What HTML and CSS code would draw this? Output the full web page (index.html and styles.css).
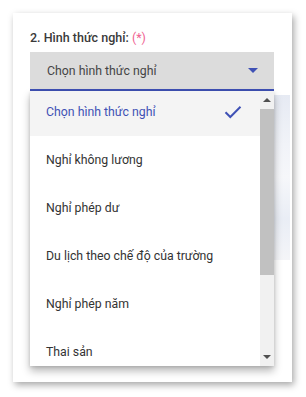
FILE: index.html
```html
<!DOCTYPE html>
<html lang="vi">
<head>
  <meta charset="UTF-8" />
  <title>Hình thức nghỉ</title>
  <link rel="stylesheet" href="styles.css">
</head>
<body>

  <!-- Form card -->
  <div class="card">
    <div class="field-label">2. Hình thức nghỉ: <span class="required">(*)</span></div>

    <div class="select">
      <span class="select-value">Chọn hình thức nghỉ</span>
      <span class="select-arrow"></span>
    </div>

    <!-- content behind the open menu -->
    <div class="behind"></div>

    <!-- open menu -->
    <div class="dropdown">
      <div class="options">
        <div class="options-inner">
          <div class="option selected">
            <span>Chọn hình thức nghỉ</span>
            <svg class="check" width="18" height="14" viewBox="0 0 18 14">
              <path d="M1.5 7.2 L6.3 12 L16.5 1.8" fill="none" stroke="#3f51b5" stroke-width="2"/>
            </svg>
          </div>
          <div class="option">Nghỉ không lương</div>
          <div class="option">Nghỉ phép dư</div>
          <div class="option">Du lịch theo chế độ của trường</div>
          <div class="option">Nghỉ phép năm</div>
          <div class="option">Thai sản</div>
        </div>
      </div>
      <div class="scrollbar">
        <span class="arrow-up"></span>
        <div class="thumb"></div>
        <span class="arrow-down"></span>
      </div>
    </div>
  </div>

</body>
</html>
```

FILE: styles.css
```css
body {
  margin: 0;
  background: #fff;
  font-family: Roboto, "Noto Sans", Arial, sans-serif;
}

.card {
  position: relative;
  margin: 13px;
  width: 279px;
  height: 369px;
  box-sizing: border-box;
  padding: 17px 18px 0 17px;
  background: #fff;
  box-shadow: 2px 3px 7px rgba(0, 0, 0, 0.35);
}

.field-label {
  font-size: 12.5px;
  line-height: 16px;
  font-weight: 500;
  color: #3a3a3a;
  margin-bottom: 6px;
}

.required {
  color: #f06292;
  font-weight: 400;
}

.select {
  height: 37px;
  display: flex;
  align-items: center;
  justify-content: space-between;
  padding: 0 16px 0 17px;
  background: #dcdcdc;
  border-bottom: 2px solid #3f51b5;
}

.select-value {
  font-size: 12.3px;
  color: #444;
}

.select-arrow {
  width: 0;
  height: 0;
  border-left: 5px solid transparent;
  border-right: 5px solid transparent;
  border-top: 5px solid #3f51b5;
}

.behind {
  margin: 4px -16px 0 0;
  height: 165px;
  background: linear-gradient(180deg, #e6eaf3 0%, #f1f3f8 30%, #f6f7fa 50%, #e9edf5 75%, #f4f5f8 100%);
}

.dropdown {
  position: absolute;
  left: 17px;
  top: 78px;
  width: 244px;
  height: 275px;
  display: flex;
  background: #fff;
  box-shadow: 0 5px 8px rgba(0, 0, 0, 0.28), 0 1px 3px rgba(0, 0, 0, 0.12);
}

.options {
  flex: 1;
  overflow: hidden;
}

.options-inner {
  margin-top: -3px;
}

.option {
  height: 48px;
  display: flex;
  align-items: center;
  justify-content: space-between;
  padding: 0 18px 0 16px;
  font-size: 12.3px;
  color: #333;
}

.option.selected {
  background: #f4f4f4;
  color: #3f51b5;
}

.check {
  display: block;
}

.scrollbar {
  width: 14px;
  background: #f1f1f1;
  display: flex;
  flex-direction: column;
  align-items: center;
}

.arrow-up,
.arrow-down {
  width: 0;
  height: 0;
  border-left: 4px solid transparent;
  border-right: 4px solid transparent;
}

.arrow-up {
  margin: 7px 0 7px;
  border-bottom: 4px solid #505050;
}

.arrow-down {
  margin-top: auto;
  margin-bottom: 7px;
  border-top: 4px solid #505050;
}

.thumb {
  width: 14px;
  height: 166px;
  background: #c1c1c1;
}
```
